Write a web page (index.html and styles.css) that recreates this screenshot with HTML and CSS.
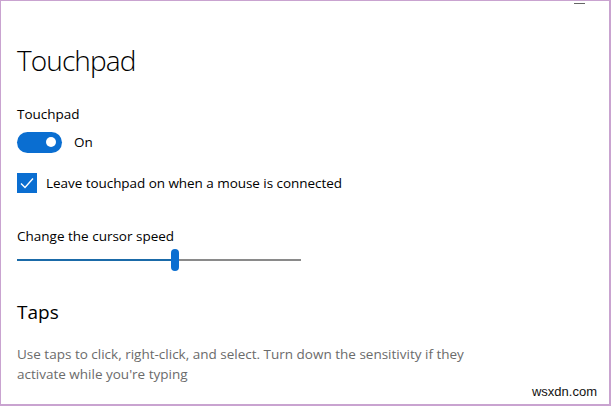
FILE: index.html
```html
<!DOCTYPE html>
<html>
<head>
<meta charset="utf-8">
<link rel="stylesheet" href="styles.css">
</head>
<body>
<div class="window">
  <div class="titlebar"><span class="minimize"></span></div>
  <main class="content">
    <h1 class="page-title">Touchpad</h1>
    <div class="label">Touchpad</div>
    <div class="toggle-row">
      <span class="toggle"><span class="knob"></span></span>
      <span class="toggle-text">On</span>
    </div>
    <div class="check-row">
      <span class="checkbox">
        <svg width="20" height="20" viewBox="0 0 20 20"><path d="M4 10.5 L8 14.5 L16 5.5" fill="none" stroke="#fff" stroke-width="1.4"/></svg>
      </span>
      <span class="check-text">Leave touchpad on when a mouse is connected</span>
    </div>
    <div class="slider-label">Change the cursor speed</div>
    <div class="slider">
      <span class="fill"></span>
      <span class="thumb"></span>
      <span class="rest"></span>
    </div>
    <h2 class="section-title">Taps</h2>
    <p class="desc">Use taps to click, right-click, and select. Turn down the sensitivity if they activate while you're typing</p>
  </main>
  <div class="watermark">wsxdn.com</div>
</div>
</body>
</html>
```
FILE: styles.css
```css
html, body {
  margin: 0;
  padding: 0;
  background: #fff;
}
.window {
  box-sizing: border-box;
  width: 611px;
  height: 406px;
  border: 1px solid #c9a3d0;
  border-right-width: 2px;
  border-bottom-width: 2px;
  position: relative;
  font-family: "Open Sans", "Noto Sans", sans-serif;
  color: #000;
  overflow: hidden;
}
.titlebar {
  height: 10px;
  display: flex;
  justify-content: flex-end;
}
.minimize {
  display: block;
  width: 11px;
  height: 1px;
  background: #666;
  margin: 2px 24px 0 0;
}
.content {
  padding: 0 0 0 16px;
}
.page-title {
  margin: 30px 0 0;
  font-size: 28px;
  font-weight: 300;
  line-height: 38px;
  letter-spacing: -0.9px;
}
.label {
  margin-top: 26px;
  font-size: 13.5px;
  line-height: 18px;
}
.toggle-row {
  display: flex;
  align-items: center;
  margin-top: 8px;
  height: 22px;
}
.toggle {
  width: 45px;
  height: 21px;
  border-radius: 11px;
  background: #0a6ed1;
  display: flex;
  align-items: center;
  justify-content: flex-end;
  box-sizing: border-box;
  padding-right: 6px;
}
.knob {
  width: 10px;
  height: 10px;
  border-radius: 50%;
  background: #fff;
}
.toggle-text {
  margin-left: 12px;
  font-size: 13.5px;
}
.check-row {
  display: flex;
  align-items: center;
  margin-top: 19px;
  height: 22px;
}
.checkbox {
  width: 20px;
  height: 20px;
  background: #0a6ed1;
  display: block;
}
.checkbox svg { display: block; }
.check-text {
  margin-left: 9px;
  font-size: 13.5px;
  letter-spacing: -0.05px;
}
.slider-label {
  margin-top: 33px;
  font-size: 13.5px;
  line-height: 18px;
}
.slider {
  display: flex;
  align-items: center;
  width: 284px;
  height: 22px;
  margin-top: 4px;
}
.fill {
  width: 154px;
  height: 2px;
  background: #1a6aa8;
}
.thumb {
  width: 8px;
  height: 22px;
  border-radius: 4px;
  background: #0a6ed1;
}
.rest {
  flex: 1;
  height: 2px;
  background: #8a8a8a;
}
.section-title {
  margin: 28px 0 0;
  font-size: 19px;
  font-weight: 400;
  line-height: 26px;
}
.desc {
  margin: 19px 0 0;
  width: 460px;
  font-size: 13.5px;
  line-height: 20px;
  color: #6b6b6b;
}
.watermark {
  position: absolute;
  right: 12px;
  bottom: 5px;
  font-family: "Liberation Sans", Arial, sans-serif;
  font-size: 13px;
  color: #111;
}
```
